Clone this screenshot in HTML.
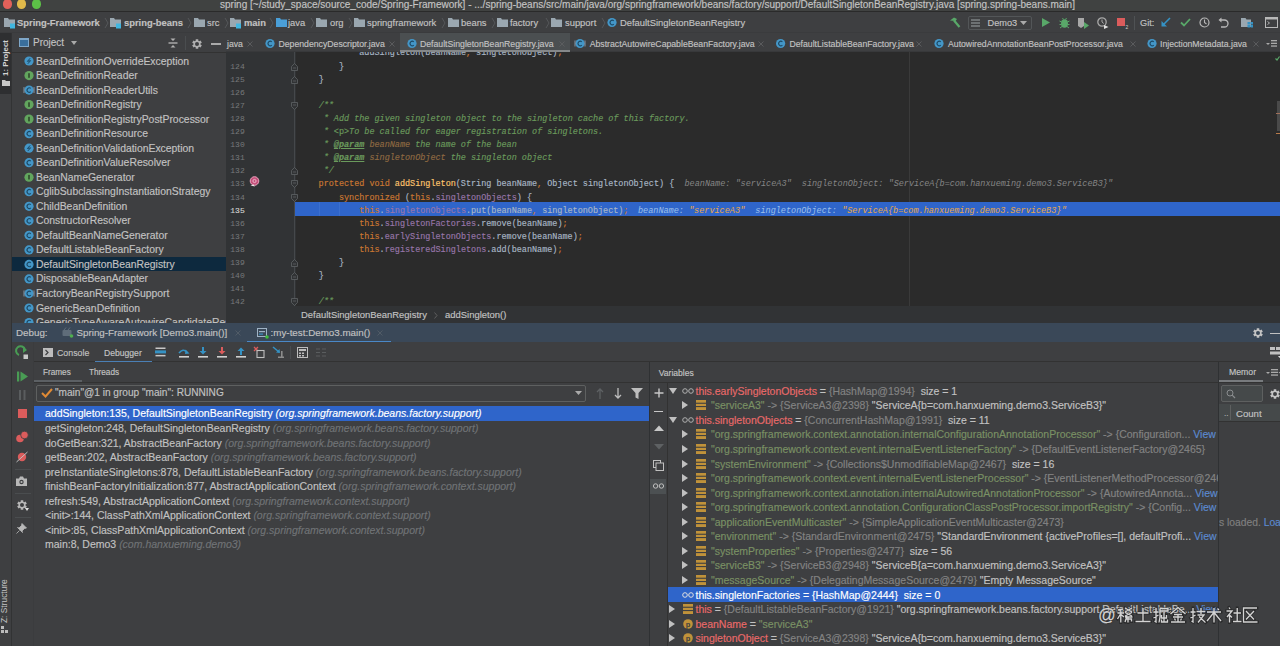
<!DOCTYPE html>
<html><head><meta charset="utf-8"><style>
*{margin:0;padding:0;box-sizing:border-box}
html,body{width:1280px;height:646px;overflow:hidden;background:#3e3f41;font-family:"Liberation Sans",sans-serif}
.a{position:absolute}
.t{position:absolute;white-space:pre;line-height:14px;height:14px;-webkit-text-stroke:0.15px currentColor}
.m{position:absolute;white-space:pre;line-height:14px;height:14px;font-family:"Liberation Mono",monospace}
.i{font-style:italic}
.b{font-weight:bold}
svg{position:absolute;overflow:visible}
</style></head><body>
<div class="a" style="left:0px;top:0px;width:1280px;height:11px;background:#404241;"></div>
<div class="a" style="left:0px;top:11px;width:1280px;height:1px;background:#2a2a2a;"></div>
<div class="a" style="left:2.6px;top:-0.7px;width:9.4px;height:9.4px;border-radius:50%;background:#e2615a"></div>
<div class="a" style="left:17.1px;top:-0.7px;width:9.4px;height:9.4px;border-radius:50%;background:#e0b94a"></div>
<div class="a" style="left:31.6px;top:-0.7px;width:9.4px;height:9.4px;border-radius:50%;background:#5cbf47"></div>
<div class="t" style="left:220px;top:-2.00px;font-size:10px;color:#c4c4c4;">spring [~/study_space/source_code/Spring-Framework] - .../spring-beans/src/main/java/org/springframework/beans/factory/support/DefaultSingletonBeanRegistry.java [spring.spring-beans.main]</div>
<div class="a" style="left:0px;top:13px;width:1280px;height:19px;background:#3e3f41;"></div>
<div class="a" style="left:0px;top:32px;width:1280px;height:1px;background:#3a3b3d;"></div>
<svg style="left:4px;top:17px" width="12" height="12" viewBox="0 0 12 12"><path d="M0 1 H4 L5 2.5 H11 V10 H0 Z" fill="#9aa7b0"/><rect x="6" y="6.5" width="5" height="5" fill="#40b6e0"/></svg>
<div class="t" style="left:17px;top:15.50px;font-size:9.4px;color:#c2c2c2;font-weight:bold">Spring-Framework</div>
<svg style="left:104px;top:18px" width="5" height="10" viewBox="0 0 5 10"><path d="M1 0 L4 5 L1 10" stroke="#5a5d5f" fill="none" stroke-width="0.8"/></svg>
<svg style="left:110px;top:17px" width="12" height="12" viewBox="0 0 12 12"><path d="M0 1 H4 L5 2.5 H11 V10 H0 Z" fill="#9aa7b0"/><rect x="6" y="6.5" width="5" height="5" fill="#40b6e0"/></svg>
<div class="t" style="left:124px;top:15.50px;font-size:9.4px;color:#c2c2c2;font-weight:bold">spring-beans</div>
<svg style="left:187px;top:18px" width="5" height="10" viewBox="0 0 5 10"><path d="M1 0 L4 5 L1 10" stroke="#5a5d5f" fill="none" stroke-width="0.8"/></svg>
<svg style="left:194px;top:17px" width="12" height="12" viewBox="0 0 12 12"><path d="M0 1 H4 L5 2.5 H11 V10 H0 Z" fill="#9aa7b0"/></svg>
<div class="t" style="left:207px;top:15.50px;font-size:9.4px;color:#c2c2c2;">src</div>
<svg style="left:224px;top:18px" width="5" height="10" viewBox="0 0 5 10"><path d="M1 0 L4 5 L1 10" stroke="#5a5d5f" fill="none" stroke-width="0.8"/></svg>
<svg style="left:230px;top:17px" width="12" height="12" viewBox="0 0 12 12"><path d="M0 1 H4 L5 2.5 H11 V10 H0 Z" fill="#9aa7b0"/><rect x="6" y="6.5" width="5" height="5" fill="#40b6e0"/></svg>
<div class="t" style="left:244px;top:15.50px;font-size:9.4px;color:#c2c2c2;font-weight:bold">main</div>
<svg style="left:269px;top:18px" width="5" height="10" viewBox="0 0 5 10"><path d="M1 0 L4 5 L1 10" stroke="#5a5d5f" fill="none" stroke-width="0.8"/></svg>
<svg style="left:276px;top:17px" width="12" height="12" viewBox="0 0 12 12"><path d="M0 1 H4 L5 2.5 H11 V10 H0 Z" fill="#4a9fd8"/></svg>
<div class="t" style="left:288px;top:15.50px;font-size:9.4px;color:#c2c2c2;">java</div>
<svg style="left:310px;top:18px" width="5" height="10" viewBox="0 0 5 10"><path d="M1 0 L4 5 L1 10" stroke="#5a5d5f" fill="none" stroke-width="0.8"/></svg>
<svg style="left:316px;top:17px" width="12" height="12" viewBox="0 0 12 12"><path d="M0 1 H4 L5 2.5 H11 V10 H0 Z" fill="#9aa7b0"/></svg>
<div class="t" style="left:330px;top:15.50px;font-size:9.4px;color:#c2c2c2;">org</div>
<svg style="left:348px;top:18px" width="5" height="10" viewBox="0 0 5 10"><path d="M1 0 L4 5 L1 10" stroke="#5a5d5f" fill="none" stroke-width="0.8"/></svg>
<svg style="left:354px;top:17px" width="12" height="12" viewBox="0 0 12 12"><path d="M0 1 H4 L5 2.5 H11 V10 H0 Z" fill="#9aa7b0"/></svg>
<div class="t" style="left:367px;top:15.50px;font-size:9.4px;color:#c2c2c2;">springframework</div>
<svg style="left:441px;top:18px" width="5" height="10" viewBox="0 0 5 10"><path d="M1 0 L4 5 L1 10" stroke="#5a5d5f" fill="none" stroke-width="0.8"/></svg>
<svg style="left:448px;top:17px" width="12" height="12" viewBox="0 0 12 12"><path d="M0 1 H4 L5 2.5 H11 V10 H0 Z" fill="#9aa7b0"/></svg>
<div class="t" style="left:461px;top:15.50px;font-size:9.4px;color:#c2c2c2;">beans</div>
<svg style="left:491px;top:18px" width="5" height="10" viewBox="0 0 5 10"><path d="M1 0 L4 5 L1 10" stroke="#5a5d5f" fill="none" stroke-width="0.8"/></svg>
<svg style="left:497px;top:17px" width="12" height="12" viewBox="0 0 12 12"><path d="M0 1 H4 L5 2.5 H11 V10 H0 Z" fill="#9aa7b0"/></svg>
<div class="t" style="left:510px;top:15.50px;font-size:9.4px;color:#c2c2c2;">factory</div>
<svg style="left:545px;top:18px" width="5" height="10" viewBox="0 0 5 10"><path d="M1 0 L4 5 L1 10" stroke="#5a5d5f" fill="none" stroke-width="0.8"/></svg>
<svg style="left:551px;top:17px" width="12" height="12" viewBox="0 0 12 12"><path d="M0 1 H4 L5 2.5 H11 V10 H0 Z" fill="#9aa7b0"/></svg>
<div class="t" style="left:565px;top:15.50px;font-size:9.4px;color:#c2c2c2;">support</div>
<svg style="left:601px;top:18px" width="5" height="10" viewBox="0 0 5 10"><path d="M1 0 L4 5 L1 10" stroke="#5a5d5f" fill="none" stroke-width="0.8"/></svg>
<svg style="left:0;top:0" width="1" height="1"><circle cx="612" cy="22.5" r="4.6" fill="#4497c8"/><path d="M613.8 20.9 A2.2 2.2 0 1 0 613.8 24.1" stroke="#1d4a66" stroke-width="1.1" fill="none"/></svg>
<div class="t" style="left:620px;top:15.50px;font-size:9.4px;color:#c2c2c2;">DefaultSingletonBeanRegistry</div>
<div class="a" style="left:0px;top:33px;width:12px;height:613px;background:#3e3f41;"></div>
<div class="a" style="left:11px;top:33px;width:1px;height:613px;background:#323334;"></div>
<div class="a" style="left:0px;top:33px;width:11px;height:61px;background:#2e2f31;"></div>
<div class="a" style="left:-0.5px;top:75.5px;width:40px;height:11px;line-height:11px;white-space:pre;font-size:7.9px;font-weight:bold;color:#d4d4d4;transform-origin:0 0;transform:rotate(-90deg)">1: Project</div>
<svg style="left:2px;top:80px" width="8" height="6" viewBox="0 0 8 6"><path d="M0 0 H3 L4 1 H8 V6 H0Z" fill="#c8c8c8"/></svg>
<div class="a" style="left:-1.5px;top:623px;width:48px;height:11px;line-height:11px;white-space:pre;font-size:8.4px;color:#c4c4c4;transform-origin:0 0;transform:rotate(-90deg)">Z: Structure</div>
<svg style="left:1px;top:626px" width="7" height="7" viewBox="0 0 7 7"><rect x="0" y="0" width="3" height="3" fill="#bbb"/><rect x="0" y="4" width="3" height="3" fill="#bbb"/><rect x="4" y="4" width="3" height="3" fill="#bbb"/></svg>
<div class="a" style="left:12px;top:33px;width:214px;height:290px;background:#3e3f41;"></div>
<div class="a" style="left:12px;top:52px;width:214px;height:1px;background:#323232;"></div>
<svg style="left:19px;top:38px" width="10" height="9" viewBox="0 0 10 9"><rect x="0" y="0" width="10" height="9" fill="#7fa7c8"/><rect x="1" y="2" width="8" height="6" fill="#3a6f9c"/></svg>
<div class="t" style="left:33px;top:36.00px;font-size:10px;color:#c2c2c2;">Project</div>
<svg style="left:71px;top:41px" width="6" height="4" viewBox="0 0 6 4"><path d="M0 0 H6 L3 4Z" fill="#aaaaaa"/></svg>
<svg style="left:168px;top:38px" width="10" height="10" viewBox="0 0 10 10"><path d="M2.5 0.5 H7.5 L5 3Z M2.5 9.5 H7.5 L5 7Z" fill="#b0b0b0"/><rect x="0.5" y="4.3" width="9" height="1.4" fill="#b0b0b0"/></svg>
<div class="a" style="left:185px;top:36px;width:1px;height:14px;background:#4a4d4f;"></div>
<svg style="left:191.5px;top:38.5px" width="10" height="10" viewBox="0 0 10 10"><path d="M6.34 8.23 L6.24 9.84 L3.76 9.84 L3.66 8.23 L2.87 7.78 L1.43 8.50 L0.18 6.34 L1.53 5.46 L1.53 4.54 L0.18 3.66 L1.43 1.50 L2.87 2.22 L3.66 1.77 L3.76 0.16 L6.24 0.16 L6.34 1.77 L7.13 2.22 L8.57 1.50 L9.82 3.66 L8.47 4.54 L8.47 5.46 L9.82 6.34 L8.57 8.50 L7.13 7.78Z" fill="#b0b0b0"/><circle cx="5.0" cy="5.0" r="2.00" fill="#3e3f41"/></svg>
<div class="a" style="left:211px;top:43px;width:10px;height:1.5px;background:#aaaaaa;"></div>
<svg style="left:0;top:0" width="1" height="1"><circle cx="29" cy="61.0" r="4.6" fill="#4497c8"/><path d="M30.2 58.2 L27.4 61.4 L30.6 60.6 L27.8 63.8" stroke="#1d4a66" stroke-width="1" fill="none"/></svg>
<div class="t" style="left:36px;top:54.50px;font-size:10.4px;color:#c2c2c2;">BeanDefinitionOverrideException</div>
<svg style="left:0;top:0" width="1" height="1"><circle cx="29" cy="75.53" r="4.6" fill="#62a55e"/><rect x="28.2" y="73.2" width="1.6" height="4.6" fill="#2f4a2b"/></svg>
<div class="t" style="left:36px;top:69.03px;font-size:10.4px;color:#c2c2c2;">BeanDefinitionReader</div>
<svg style="left:0;top:0" width="1" height="1"><circle cx="29" cy="90.06" r="4.6" fill="#4497c8"/><path d="M30.8 88.46000000000001 A2.2 2.2 0 1 0 30.8 91.66" stroke="#1d4a66" stroke-width="1.1" fill="none"/><path d="M24 87.06 V93.06 M34 87.06 V93.06" stroke="#9ab" stroke-width="0.8"/></svg>
<div class="t" style="left:36px;top:83.56px;font-size:10.4px;color:#c2c2c2;">BeanDefinitionReaderUtils</div>
<svg style="left:0;top:0" width="1" height="1"><circle cx="29" cy="104.59" r="4.6" fill="#62a55e"/><rect x="28.2" y="102.3" width="1.6" height="4.6" fill="#2f4a2b"/></svg>
<div class="t" style="left:36px;top:98.09px;font-size:10.4px;color:#c2c2c2;">BeanDefinitionRegistry</div>
<svg style="left:0;top:0" width="1" height="1"><circle cx="29" cy="119.12" r="4.6" fill="#62a55e"/><rect x="28.2" y="116.8" width="1.6" height="4.6" fill="#2f4a2b"/></svg>
<div class="t" style="left:36px;top:112.62px;font-size:10.4px;color:#c2c2c2;">BeanDefinitionRegistryPostProcessor</div>
<svg style="left:0;top:0" width="1" height="1"><circle cx="29" cy="133.64999999999998" r="4.6" fill="#4497c8"/><path d="M30.8 132.04999999999998 A2.2 2.2 0 1 0 30.8 135.24999999999997" stroke="#1d4a66" stroke-width="1.1" fill="none"/></svg>
<div class="t" style="left:36px;top:127.15px;font-size:10.4px;color:#c2c2c2;">BeanDefinitionResource</div>
<svg style="left:0;top:0" width="1" height="1"><circle cx="29" cy="148.18" r="4.6" fill="#4497c8"/><path d="M30.2 145.38 L27.4 148.58 L30.6 147.78 L27.8 150.98000000000002" stroke="#1d4a66" stroke-width="1" fill="none"/></svg>
<div class="t" style="left:36px;top:141.68px;font-size:10.4px;color:#c2c2c2;">BeanDefinitionValidationException</div>
<svg style="left:0;top:0" width="1" height="1"><circle cx="29" cy="162.70999999999998" r="4.6" fill="#4497c8"/><path d="M30.8 161.10999999999999 A2.2 2.2 0 1 0 30.8 164.30999999999997" stroke="#1d4a66" stroke-width="1.1" fill="none"/></svg>
<div class="t" style="left:36px;top:156.21px;font-size:10.4px;color:#c2c2c2;">BeanDefinitionValueResolver</div>
<svg style="left:0;top:0" width="1" height="1"><circle cx="29" cy="177.24" r="4.6" fill="#62a55e"/><rect x="28.2" y="174.9" width="1.6" height="4.6" fill="#2f4a2b"/></svg>
<div class="t" style="left:36px;top:170.74px;font-size:10.4px;color:#c2c2c2;">BeanNameGenerator</div>
<svg style="left:0;top:0" width="1" height="1"><circle cx="29" cy="191.76999999999998" r="4.6" fill="#4497c8"/><path d="M30.8 190.17 A2.2 2.2 0 1 0 30.8 193.36999999999998" stroke="#1d4a66" stroke-width="1.1" fill="none"/></svg>
<div class="t" style="left:36px;top:185.27px;font-size:10.4px;color:#c2c2c2;">CglibSubclassingInstantiationStrategy</div>
<svg style="left:0;top:0" width="1" height="1"><circle cx="29" cy="206.29999999999998" r="4.6" fill="#4497c8"/><path d="M30.8 204.7 A2.2 2.2 0 1 0 30.8 207.89999999999998" stroke="#1d4a66" stroke-width="1.1" fill="none"/></svg>
<div class="t" style="left:36px;top:199.80px;font-size:10.4px;color:#c2c2c2;">ChildBeanDefinition</div>
<svg style="left:0;top:0" width="1" height="1"><circle cx="29" cy="220.82999999999998" r="4.6" fill="#4497c8"/><path d="M30.8 219.23 A2.2 2.2 0 1 0 30.8 222.42999999999998" stroke="#1d4a66" stroke-width="1.1" fill="none"/></svg>
<div class="t" style="left:36px;top:214.33px;font-size:10.4px;color:#c2c2c2;">ConstructorResolver</div>
<svg style="left:0;top:0" width="1" height="1"><circle cx="29" cy="235.35999999999999" r="4.6" fill="#4497c8"/><path d="M30.8 233.76 A2.2 2.2 0 1 0 30.8 236.95999999999998" stroke="#1d4a66" stroke-width="1.1" fill="none"/></svg>
<div class="t" style="left:36px;top:228.86px;font-size:10.4px;color:#c2c2c2;">DefaultBeanNameGenerator</div>
<svg style="left:0;top:0" width="1" height="1"><circle cx="29" cy="249.89" r="4.6" fill="#4497c8"/><path d="M30.8 248.29 A2.2 2.2 0 1 0 30.8 251.48999999999998" stroke="#1d4a66" stroke-width="1.1" fill="none"/></svg>
<div class="t" style="left:36px;top:243.39px;font-size:10.4px;color:#c2c2c2;">DefaultListableBeanFactory</div>
<div class="a" style="left:12px;top:256.91999999999996px;width:214px;height:14.5px;background:#0d293e;"></div>
<svg style="left:0;top:0" width="1" height="1"><circle cx="29" cy="264.41999999999996" r="4.6" fill="#4497c8"/><path d="M30.8 262.81999999999994 A2.2 2.2 0 1 0 30.8 266.02" stroke="#1d4a66" stroke-width="1.1" fill="none"/></svg>
<div class="t" style="left:36px;top:257.92px;font-size:10.4px;color:#c2c2c2;">DefaultSingletonBeanRegistry</div>
<svg style="left:0;top:0" width="1" height="1"><circle cx="29" cy="278.95" r="4.6" fill="#4497c8"/><path d="M30.8 277.34999999999997 A2.2 2.2 0 1 0 30.8 280.55" stroke="#1d4a66" stroke-width="1.1" fill="none"/></svg>
<div class="t" style="left:36px;top:272.45px;font-size:10.4px;color:#c2c2c2;">DisposableBeanAdapter</div>
<svg style="left:0;top:0" width="1" height="1"><circle cx="29" cy="293.48" r="4.6" fill="#4497c8"/><path d="M30.8 291.88 A2.2 2.2 0 1 0 30.8 295.08000000000004" stroke="#1d4a66" stroke-width="1.1" fill="none"/><path d="M24 290.48 V296.48 M34 290.48 V296.48" stroke="#9ab" stroke-width="0.8"/></svg>
<div class="t" style="left:36px;top:286.98px;font-size:10.4px;color:#c2c2c2;">FactoryBeanRegistrySupport</div>
<svg style="left:0;top:0" width="1" height="1"><circle cx="29" cy="308.01" r="4.6" fill="#4497c8"/><path d="M30.8 306.40999999999997 A2.2 2.2 0 1 0 30.8 309.61" stroke="#1d4a66" stroke-width="1.1" fill="none"/></svg>
<div class="t" style="left:36px;top:301.51px;font-size:10.4px;color:#c2c2c2;">GenericBeanDefinition</div>
<svg style="left:0;top:0" width="1" height="1"><circle cx="29" cy="322.53999999999996" r="4.6" fill="#4497c8"/><path d="M30.8 320.93999999999994 A2.2 2.2 0 1 0 30.8 324.14" stroke="#1d4a66" stroke-width="1.1" fill="none"/></svg>
<div class="t" style="left:36px;top:316.04px;font-size:10.4px;color:#c2c2c2;">GenericTypeAwareAutowireCandidateResolver</div>
<div class="a" style="left:226px;top:33px;width:1054px;height:19px;background:#3e3f41;"></div>
<div class="a" style="left:226px;top:51px;width:1054px;height:1px;background:#38393b;"></div>
<div class="a" style="left:400px;top:33px;width:170px;height:18px;background:#4b4f51;"></div>
<div class="a" style="left:400px;top:50px;width:170px;height:1.5px;background:#85888a;"></div>
<div class="t" style="left:227px;top:36.50px;font-size:8.7px;color:#c2c2c2;">java</div>
<svg style="left:247px;top:40.5px" width="6" height="6" viewBox="0 0 6 6"><path d="M0.5 0.5 L5.5 5.5 M5.5 0.5 L0.5 5.5" stroke="#5e5f61" stroke-width="0.9"/></svg>
<svg style="left:0;top:0" width="1" height="1"><circle cx="270" cy="43.5" r="4.6" fill="#4497c8"/><path d="M271.8 41.9 A2.2 2.2 0 1 0 271.8 45.1" stroke="#1d4a66" stroke-width="1.1" fill="none"/></svg>
<div class="t" style="left:278.5px;top:36.50px;font-size:8.7px;color:#c2c2c2;">DependencyDescriptor.java</div>
<svg style="left:389px;top:40.5px" width="6" height="6" viewBox="0 0 6 6"><path d="M0.5 0.5 L5.5 5.5 M5.5 0.5 L0.5 5.5" stroke="#5e5f61" stroke-width="0.9"/></svg>
<svg style="left:0;top:0" width="1" height="1"><circle cx="412" cy="43.5" r="4.6" fill="#4497c8"/><path d="M413.8 41.9 A2.2 2.2 0 1 0 413.8 45.1" stroke="#1d4a66" stroke-width="1.1" fill="none"/></svg>
<div class="t" style="left:420px;top:36.50px;font-size:8.7px;color:#c2c2c2;">DefaultSingletonBeanRegistry.java</div>
<svg style="left:558.5px;top:40.5px" width="6" height="6" viewBox="0 0 6 6"><path d="M0.5 0.5 L5.5 5.5 M5.5 0.5 L0.5 5.5" stroke="#5e5f61" stroke-width="0.9"/></svg>
<svg style="left:0;top:0" width="1" height="1"><circle cx="580" cy="43.5" r="4.6" fill="#4497c8"/><path d="M581.8 41.9 A2.2 2.2 0 1 0 581.8 45.1" stroke="#1d4a66" stroke-width="1.1" fill="none"/><path d="M575 40.5 V46.5 M585 40.5 V46.5" stroke="#9ab" stroke-width="0.8"/></svg>
<div class="t" style="left:589.7px;top:36.50px;font-size:8.7px;color:#c2c2c2;">AbstractAutowireCapableBeanFactory.java</div>
<svg style="left:758px;top:40.5px" width="6" height="6" viewBox="0 0 6 6"><path d="M0.5 0.5 L5.5 5.5 M5.5 0.5 L0.5 5.5" stroke="#5e5f61" stroke-width="0.9"/></svg>
<svg style="left:0;top:0" width="1" height="1"><circle cx="780.6" cy="43.5" r="4.6" fill="#4497c8"/><path d="M782.4 41.9 A2.2 2.2 0 1 0 782.4 45.1" stroke="#1d4a66" stroke-width="1.1" fill="none"/></svg>
<div class="t" style="left:789.5px;top:36.50px;font-size:8.7px;color:#c2c2c2;">DefaultListableBeanFactory.java</div>
<svg style="left:916px;top:40.5px" width="6" height="6" viewBox="0 0 6 6"><path d="M0.5 0.5 L5.5 5.5 M5.5 0.5 L0.5 5.5" stroke="#5e5f61" stroke-width="0.9"/></svg>
<svg style="left:0;top:0" width="1" height="1"><circle cx="939" cy="43.5" r="4.6" fill="#4497c8"/><path d="M940.8 41.9 A2.2 2.2 0 1 0 940.8 45.1" stroke="#1d4a66" stroke-width="1.1" fill="none"/></svg>
<div class="t" style="left:948px;top:36.50px;font-size:8.7px;color:#c2c2c2;">AutowiredAnnotationBeanPostProcessor.java</div>
<svg style="left:1130px;top:40.5px" width="6" height="6" viewBox="0 0 6 6"><path d="M0.5 0.5 L5.5 5.5 M5.5 0.5 L0.5 5.5" stroke="#5e5f61" stroke-width="0.9"/></svg>
<svg style="left:0;top:0" width="1" height="1"><circle cx="1152" cy="43.5" r="4.6" fill="#4497c8"/><path d="M1153.8 41.9 A2.2 2.2 0 1 0 1153.8 45.1" stroke="#1d4a66" stroke-width="1.1" fill="none"/></svg>
<div class="t" style="left:1160px;top:36.50px;font-size:8.7px;color:#c2c2c2;">InjectionMetadata.java</div>
<svg style="left:1253px;top:40.5px" width="6" height="6" viewBox="0 0 6 6"><path d="M0.5 0.5 L5.5 5.5 M5.5 0.5 L0.5 5.5" stroke="#5e5f61" stroke-width="0.9"/></svg>
<svg style="left:1266px;top:39px" width="12" height="9" viewBox="0 0 12 9"><path d="M0 4 L2 6 L4 4Z" fill="#aaa"/><rect x="5" y="1" width="6" height="1.3" fill="#aaa"/><rect x="5" y="3.7" width="6" height="1.3" fill="#aaa"/><rect x="5" y="6.4" width="6" height="1.3" fill="#aaa"/></svg>
<div class="a" style="left:0;top:52px;width:1280px;height:254px;overflow:hidden"><div class="a" style="left:0;top:-52px;width:1280px;height:646px">
<div class="a" style="left:226px;top:52px;width:70px;height:254px;background:#313335;"></div>
<div class="a" style="left:296px;top:52px;width:984px;height:254px;background:#2b2b2b;"></div>
<div class="a" style="left:909px;top:52px;width:1px;height:254px;background:#3a3a3a;"></div>
<div class="a" style="left:294px;top:202px;width:986px;height:13.5px;background:#2f65ca;"></div>
<div class="a" style="left:318.5px;top:202px;width:1px;height:13.5px;background:#3a6fcf;"></div>
<div class="a" style="left:339px;top:202px;width:1px;height:13.5px;background:#3a6fcf;"></div>
<div class="a" style="left:293.5px;top:52px;width:1px;height:254px;background:#45484b;"></div>
<div class="t" style="left:230.3px;top:59.50px;font-size:8.0px;color:#77797b;font-family:'Liberation Mono',monospace;-webkit-text-stroke:0;">124</div>
<div class="t" style="left:230.3px;top:72.60px;font-size:8.0px;color:#77797b;font-family:'Liberation Mono',monospace;-webkit-text-stroke:0;">125</div>
<div class="t" style="left:230.3px;top:85.70px;font-size:8.0px;color:#77797b;font-family:'Liberation Mono',monospace;-webkit-text-stroke:0;">126</div>
<div class="t" style="left:230.3px;top:98.80px;font-size:8.0px;color:#77797b;font-family:'Liberation Mono',monospace;-webkit-text-stroke:0;">127</div>
<div class="t" style="left:230.3px;top:111.90px;font-size:8.0px;color:#77797b;font-family:'Liberation Mono',monospace;-webkit-text-stroke:0;">128</div>
<div class="t" style="left:230.3px;top:125.00px;font-size:8.0px;color:#77797b;font-family:'Liberation Mono',monospace;-webkit-text-stroke:0;">129</div>
<div class="t" style="left:230.3px;top:138.10px;font-size:8.0px;color:#77797b;font-family:'Liberation Mono',monospace;-webkit-text-stroke:0;">130</div>
<div class="t" style="left:230.3px;top:151.20px;font-size:8.0px;color:#77797b;font-family:'Liberation Mono',monospace;-webkit-text-stroke:0;">131</div>
<div class="t" style="left:230.3px;top:164.30px;font-size:8.0px;color:#77797b;font-family:'Liberation Mono',monospace;-webkit-text-stroke:0;">132</div>
<div class="t" style="left:230.3px;top:177.40px;font-size:8.0px;color:#77797b;font-family:'Liberation Mono',monospace;-webkit-text-stroke:0;">133</div>
<div class="t" style="left:230.3px;top:190.50px;font-size:8.0px;color:#77797b;font-family:'Liberation Mono',monospace;-webkit-text-stroke:0;">134</div>
<div class="t" style="left:230.3px;top:203.60px;font-size:8.0px;color:#d0d0d0;font-family:'Liberation Mono',monospace;">135</div>
<div class="t" style="left:230.3px;top:216.70px;font-size:8.0px;color:#77797b;font-family:'Liberation Mono',monospace;-webkit-text-stroke:0;">136</div>
<div class="t" style="left:230.3px;top:229.80px;font-size:8.0px;color:#77797b;font-family:'Liberation Mono',monospace;-webkit-text-stroke:0;">137</div>
<div class="t" style="left:230.3px;top:242.90px;font-size:8.0px;color:#77797b;font-family:'Liberation Mono',monospace;-webkit-text-stroke:0;">138</div>
<div class="t" style="left:230.3px;top:256.00px;font-size:8.0px;color:#77797b;font-family:'Liberation Mono',monospace;-webkit-text-stroke:0;">139</div>
<div class="t" style="left:230.3px;top:269.10px;font-size:8.0px;color:#77797b;font-family:'Liberation Mono',monospace;-webkit-text-stroke:0;">140</div>
<div class="t" style="left:230.3px;top:282.20px;font-size:8.0px;color:#77797b;font-family:'Liberation Mono',monospace;-webkit-text-stroke:0;">141</div>
<div class="t" style="left:230.3px;top:295.30px;font-size:8.0px;color:#77797b;font-family:'Liberation Mono',monospace;-webkit-text-stroke:0;">142</div>
<svg style="left:290.5px;top:62.5px" width="7" height="8" viewBox="0 0 7 8"><path d="M0.5 7.5 H6.5 V3.5 L3.5 0.5 L0.5 3.5Z" fill="#313335" stroke="#5f6366" stroke-width="0.8"/><path d="M2 5 H5" stroke="#5f6366" stroke-width="0.8"/></svg>
<svg style="left:290.5px;top:75.6px" width="7" height="8" viewBox="0 0 7 8"><path d="M0.5 7.5 H6.5 V3.5 L3.5 0.5 L0.5 3.5Z" fill="#313335" stroke="#5f6366" stroke-width="0.8"/><path d="M2 5 H5" stroke="#5f6366" stroke-width="0.8"/></svg>
<svg style="left:290.5px;top:167.3px" width="7" height="8" viewBox="0 0 7 8"><path d="M0.5 7.5 H6.5 V3.5 L3.5 0.5 L0.5 3.5Z" fill="#313335" stroke="#5f6366" stroke-width="0.8"/><path d="M2 5 H5" stroke="#5f6366" stroke-width="0.8"/></svg>
<svg style="left:290.5px;top:259.0px" width="7" height="8" viewBox="0 0 7 8"><path d="M0.5 7.5 H6.5 V3.5 L3.5 0.5 L0.5 3.5Z" fill="#313335" stroke="#5f6366" stroke-width="0.8"/><path d="M2 5 H5" stroke="#5f6366" stroke-width="0.8"/></svg>
<svg style="left:290.5px;top:272.1px" width="7" height="8" viewBox="0 0 7 8"><path d="M0.5 7.5 H6.5 V3.5 L3.5 0.5 L0.5 3.5Z" fill="#313335" stroke="#5f6366" stroke-width="0.8"/><path d="M2 5 H5" stroke="#5f6366" stroke-width="0.8"/></svg>
<svg style="left:290.5px;top:101.8px" width="7" height="8" viewBox="0 0 7 8"><path d="M0.5 0.5 H6.5 V4.5 L3.5 7.5 L0.5 4.5Z" fill="#313335" stroke="#5f6366" stroke-width="0.8"/><path d="M2 3 H5" stroke="#5f6366" stroke-width="0.8"/></svg>
<svg style="left:290.5px;top:180.39999999999998px" width="7" height="8" viewBox="0 0 7 8"><path d="M0.5 0.5 H6.5 V4.5 L3.5 7.5 L0.5 4.5Z" fill="#313335" stroke="#5f6366" stroke-width="0.8"/><path d="M2 3 H5" stroke="#5f6366" stroke-width="0.8"/></svg>
<svg style="left:290.5px;top:193.5px" width="7" height="8" viewBox="0 0 7 8"><path d="M0.5 0.5 H6.5 V4.5 L3.5 7.5 L0.5 4.5Z" fill="#313335" stroke="#5f6366" stroke-width="0.8"/><path d="M2 3 H5" stroke="#5f6366" stroke-width="0.8"/></svg>
<svg style="left:290.5px;top:298.29999999999995px" width="7" height="8" viewBox="0 0 7 8"><path d="M0.5 0.5 H6.5 V4.5 L3.5 7.5 L0.5 4.5Z" fill="#313335" stroke="#5f6366" stroke-width="0.8"/><path d="M2 3 H5" stroke="#5f6366" stroke-width="0.8"/></svg>
<svg style="left:249px;top:176px" width="12" height="13" viewBox="0 0 12 13"><circle cx="5.5" cy="5" r="4.3" fill="#c4507a" stroke="#e7a3bd" stroke-width="1"/><circle cx="5.5" cy="5" r="1.6" fill="none" stroke="#f0c8d8" stroke-width="0.8"/><path d="M1.5 9.5 L4.5 8.5 L6 10.5 Z" fill="#e8e8e8"/></svg>
<div class="t" style="left:359.26px;top:46.40px;font-size:8.47px;color:#a9b7c6;font-family:'Liberation Mono',monospace;">addSingleton(beanName</div>
<div class="t" style="left:465.94px;top:46.40px;font-size:8.47px;color:#cc7832;font-family:'Liberation Mono',monospace;">, </div>
<div class="t" style="left:476.1px;top:46.40px;font-size:8.47px;color:#a9b7c6;font-family:'Liberation Mono',monospace;">singletonObject)</div>
<div class="t" style="left:557.38px;top:46.40px;font-size:8.47px;color:#cc7832;font-family:'Liberation Mono',monospace;">;</div>
<div class="t" style="left:298.3px;top:59.50px;font-size:8.47px;color:#a9b7c6;font-family:'Liberation Mono',monospace;">        }</div>
<div class="t" style="left:298.3px;top:72.60px;font-size:8.47px;color:#a9b7c6;font-family:'Liberation Mono',monospace;">    }</div>
<div class="t" style="left:298.3px;top:98.80px;font-size:8.47px;color:#6a9a5c;font-family:'Liberation Mono',monospace;font-style:italic;">    /**</div>
<div class="t" style="left:298.3px;top:111.90px;font-size:8.47px;color:#6a9a5c;font-family:'Liberation Mono',monospace;font-style:italic;">     * Add the given singleton object to the singleton cache of this factory.</div>
<div class="t" style="left:298.3px;top:125.00px;font-size:8.47px;color:#6a9a5c;font-family:'Liberation Mono',monospace;font-style:italic;">     * </div>
<div class="t" style="left:333.86px;top:125.00px;font-size:8.47px;color:#6a9a5c;font-family:'Liberation Mono',monospace;font-style:normal;">&lt;p&gt;</div>
<div class="t" style="left:349.1px;top:125.00px;font-size:8.47px;color:#6a9a5c;font-family:'Liberation Mono',monospace;font-style:italic;">To be called for eager registration of singletons.</div>
<div class="t" style="left:298.3px;top:138.10px;font-size:8.47px;color:#6a9a5c;font-family:'Liberation Mono',monospace;font-style:italic;">     * </div>
<div class="t" style="left:333.86px;top:138.10px;font-size:8.47px;color:#6a9a5c;font-family:'Liberation Mono',monospace;font-weight:bold;font-style:italic;text-decoration:underline;">@param</div>
<div class="t" style="left:369.42px;top:138.10px;font-size:8.47px;color:#8f6a42;font-family:'Liberation Mono',monospace;font-style:italic;">beanName</div>
<div class="t" style="left:410.06px;top:138.10px;font-size:8.47px;color:#6a9a5c;font-family:'Liberation Mono',monospace;font-style:italic;"> the name of the bean</div>
<div class="t" style="left:298.3px;top:151.20px;font-size:8.47px;color:#6a9a5c;font-family:'Liberation Mono',monospace;font-style:italic;">     * </div>
<div class="t" style="left:333.86px;top:151.20px;font-size:8.47px;color:#6a9a5c;font-family:'Liberation Mono',monospace;font-weight:bold;font-style:italic;text-decoration:underline;">@param</div>
<div class="t" style="left:369.42px;top:151.20px;font-size:8.47px;color:#8f6a42;font-family:'Liberation Mono',monospace;font-style:italic;">singletonObject</div>
<div class="t" style="left:445.62px;top:151.20px;font-size:8.47px;color:#6a9a5c;font-family:'Liberation Mono',monospace;font-style:italic;"> the singleton object</div>
<div class="t" style="left:298.3px;top:164.30px;font-size:8.47px;color:#6a9a5c;font-family:'Liberation Mono',monospace;font-style:italic;">     */</div>
<div class="t" style="left:318.62px;top:177.40px;font-size:8.47px;color:#cc7832;font-family:'Liberation Mono',monospace;">protected void </div>
<div class="t" style="left:394.82px;top:177.40px;font-size:8.47px;color:#ffc66d;font-family:'Liberation Mono',monospace;">addSingleton</div>
<div class="t" style="left:455.78px;top:177.40px;font-size:8.47px;color:#a9b7c6;font-family:'Liberation Mono',monospace;">(String beanName</div>
<div class="t" style="left:537.06px;top:177.40px;font-size:8.47px;color:#cc7832;font-family:'Liberation Mono',monospace;">, </div>
<div class="t" style="left:547.22px;top:177.40px;font-size:8.47px;color:#a9b7c6;font-family:'Liberation Mono',monospace;">Object singletonObject) {</div>
<div class="t" style="left:338.94px;top:190.50px;font-size:8.47px;color:#cc7832;font-family:'Liberation Mono',monospace;">synchronized </div>
<div class="t" style="left:404.98px;top:190.50px;font-size:8.47px;color:#a9b7c6;font-family:'Liberation Mono',monospace;">(</div>
<div class="t" style="left:410.06px;top:190.50px;font-size:8.47px;color:#cc7832;font-family:'Liberation Mono',monospace;">this</div>
<div class="t" style="left:430.38px;top:190.50px;font-size:8.47px;color:#a9b7c6;font-family:'Liberation Mono',monospace;">.</div>
<div class="t" style="left:435.46px;top:190.50px;font-size:8.47px;color:#9876aa;font-family:'Liberation Mono',monospace;">singletonObjects</div>
<div class="t" style="left:516.74px;top:190.50px;font-size:8.47px;color:#a9b7c6;font-family:'Liberation Mono',monospace;">) {</div>
<div class="t" style="left:359.26px;top:203.60px;font-size:8.47px;color:#cc7832;font-family:'Liberation Mono',monospace;">this</div>
<div class="t" style="left:379.58px;top:203.60px;font-size:8.47px;color:#a9b7c6;font-family:'Liberation Mono',monospace;">.</div>
<div class="t" style="left:384.66px;top:203.60px;font-size:8.47px;color:#9876aa;font-family:'Liberation Mono',monospace;">singletonObjects</div>
<div class="t" style="left:465.94px;top:203.60px;font-size:8.47px;color:#a9b7c6;font-family:'Liberation Mono',monospace;">.put(beanName</div>
<div class="t" style="left:531.98px;top:203.60px;font-size:8.47px;color:#cc7832;font-family:'Liberation Mono',monospace;">, </div>
<div class="t" style="left:542.14px;top:203.60px;font-size:8.47px;color:#a9b7c6;font-family:'Liberation Mono',monospace;">singletonObject)</div>
<div class="t" style="left:623.42px;top:203.60px;font-size:8.47px;color:#cc7832;font-family:'Liberation Mono',monospace;">;</div>
<div class="t" style="left:359.26px;top:216.70px;font-size:8.47px;color:#cc7832;font-family:'Liberation Mono',monospace;">this</div>
<div class="t" style="left:379.58px;top:216.70px;font-size:8.47px;color:#a9b7c6;font-family:'Liberation Mono',monospace;">.</div>
<div class="t" style="left:384.66px;top:216.70px;font-size:8.47px;color:#9876aa;font-family:'Liberation Mono',monospace;">singletonFactories</div>
<div class="t" style="left:476.1px;top:216.70px;font-size:8.47px;color:#a9b7c6;font-family:'Liberation Mono',monospace;">.remove(beanName)</div>
<div class="t" style="left:562.46px;top:216.70px;font-size:8.47px;color:#cc7832;font-family:'Liberation Mono',monospace;">;</div>
<div class="t" style="left:359.26px;top:229.80px;font-size:8.47px;color:#cc7832;font-family:'Liberation Mono',monospace;">this</div>
<div class="t" style="left:379.58px;top:229.80px;font-size:8.47px;color:#a9b7c6;font-family:'Liberation Mono',monospace;">.</div>
<div class="t" style="left:384.66px;top:229.80px;font-size:8.47px;color:#9876aa;font-family:'Liberation Mono',monospace;">earlySingletonObjects</div>
<div class="t" style="left:491.34px;top:229.80px;font-size:8.47px;color:#a9b7c6;font-family:'Liberation Mono',monospace;">.remove(beanName)</div>
<div class="t" style="left:577.7px;top:229.80px;font-size:8.47px;color:#cc7832;font-family:'Liberation Mono',monospace;">;</div>
<div class="t" style="left:359.26px;top:242.90px;font-size:8.47px;color:#cc7832;font-family:'Liberation Mono',monospace;">this</div>
<div class="t" style="left:379.58px;top:242.90px;font-size:8.47px;color:#a9b7c6;font-family:'Liberation Mono',monospace;">.</div>
<div class="t" style="left:384.66px;top:242.90px;font-size:8.47px;color:#9876aa;font-family:'Liberation Mono',monospace;">registeredSingletons</div>
<div class="t" style="left:486.26px;top:242.90px;font-size:8.47px;color:#a9b7c6;font-family:'Liberation Mono',monospace;">.add(beanName)</div>
<div class="t" style="left:557.38px;top:242.90px;font-size:8.47px;color:#cc7832;font-family:'Liberation Mono',monospace;">;</div>
<div class="t" style="left:298.3px;top:256.00px;font-size:8.47px;color:#a9b7c6;font-family:'Liberation Mono',monospace;">        }</div>
<div class="t" style="left:298.3px;top:269.10px;font-size:8.47px;color:#a9b7c6;font-family:'Liberation Mono',monospace;">    }</div>
<div class="t" style="left:298.3px;top:295.30px;font-size:8.47px;color:#6a9a5c;font-family:'Liberation Mono',monospace;font-style:italic;">    /**</div>
<div class="t" style="left:684.5px;top:177.40px;font-size:8.5px;color:#858585;font-family:'Liberation Mono',monospace;font-style:italic;-webkit-text-stroke:0;">beanName: "serviceA3"  singletonObject: "ServiceA{b=com.hanxueming.demo3.ServiceB3}"</div>
<div class="t" style="left:638px;top:203.60px;font-size:8.5px;font-family:'Liberation Mono',monospace;font-style:italic;-webkit-text-stroke:0;color:#9cc0ea">beanName: <span style="color:#e8a848">"serviceA3"</span>  singletonObject: <span style="color:#e8a848">"ServiceA{b=com.hanxueming.demo3.ServiceB3}"</span></div>
<svg style="left:1275px;top:56px" width="5" height="5" viewBox="0 0 5 5"><path d="M0.5 2.5 L2 4 L4.5 0.5" stroke="#59a869" stroke-width="1.2" fill="none"/></svg>
<div class="a" style="left:1277px;top:101px;width:3px;height:30px;background:#4a4a4a;"></div>
<div class="a" style="left:1276px;top:113px;width:4px;height:1px;background:#a0705a;"></div>
<div class="a" style="left:1276px;top:133px;width:4px;height:1px;background:#b87a4a;"></div>
</div></div>
<div class="a" style="left:226px;top:306px;width:1054px;height:17px;background:#313335;"></div>
<div class="t" style="left:301px;top:308.00px;font-size:9.45px;color:#c2c2c2;">DefaultSingletonBeanRegistry</div>
<svg style="left:434px;top:312px" width="4" height="7" viewBox="0 0 4 7"><path d="M0.5 0.5 L3 3.5 L0.5 6.5" stroke="#6a6a6a" fill="none" stroke-width="0.8"/></svg>
<div class="t" style="left:445px;top:308.00px;font-size:9.45px;color:#c2c2c2;">addSingleton()</div>
<div class="a" style="left:12px;top:323px;width:1268px;height:19px;background:#3a4858;"></div>
<div class="t" style="left:16px;top:325.80px;font-size:9.8px;color:#c2c2c2;">Debug:</div>
<svg style="left:62px;top:327px" width="12" height="11" viewBox="0 0 12 11"><rect x="0.5" y="3" width="9" height="6" rx="1" fill="#5f6d7a"/><path d="M2 3 L4 0.5 M6 3 L8 0.5" stroke="#5f6d7a" stroke-width="1"/><circle cx="9.5" cy="9" r="1.8" fill="#4fae4f"/></svg>
<div class="t" style="left:76.5px;top:325.80px;font-size:9.8px;color:#c2c2c2;">Spring-Framework [Demo3.main()]</div>
<svg style="left:234.5px;top:330px" width="6" height="6" viewBox="0 0 6 6"><path d="M0.5 0.5 L5.5 5.5 M5.5 0.5 L0.5 5.5" stroke="#525d68" stroke-width="0.9"/></svg>
<svg style="left:257px;top:327px" width="12" height="12" viewBox="0 0 12 12"><rect x="0.5" y="1.5" width="9" height="8" fill="none" stroke="#9fb3c5" stroke-width="1"/><rect x="2" y="4" width="6" height="1.2" fill="#9fb3c5"/><rect x="2" y="6.5" width="4" height="1.2" fill="#3a8fc0"/><circle cx="10" cy="10" r="1.8" fill="#3dba3a"/></svg>
<div class="t" style="left:270.6px;top:325.80px;font-size:9.8px;color:#c2c2c2;">:my-test:Demo3.main()</div>
<svg style="left:377px;top:330px" width="6" height="6" viewBox="0 0 6 6"><path d="M0.5 0.5 L5.5 5.5 M5.5 0.5 L0.5 5.5" stroke="#525d68" stroke-width="0.9"/></svg>
<div class="a" style="left:247px;top:341px;width:144px;height:2px;background:#4a88c7;"></div>
<svg style="left:1253px;top:328px" width="10" height="10" viewBox="0 0 10 10"><path d="M6.34 8.23 L6.24 9.84 L3.76 9.84 L3.66 8.23 L2.87 7.78 L1.43 8.50 L0.18 6.34 L1.53 5.46 L1.53 4.54 L0.18 3.66 L1.43 1.50 L2.87 2.22 L3.66 1.77 L3.76 0.16 L6.24 0.16 L6.34 1.77 L7.13 2.22 L8.57 1.50 L9.82 3.66 L8.47 4.54 L8.47 5.46 L9.82 6.34 L8.57 8.50 L7.13 7.78Z" fill="#c4c4c4"/><circle cx="5.0" cy="5.0" r="2.00" fill="#3a4858"/></svg>
<div class="a" style="left:1270px;top:332.5px;width:10px;height:1.5px;background:#c0c0c0;"></div>
<div class="a" style="left:12px;top:342px;width:1268px;height:304px;background:#3e3f41;"></div>
<div class="a" style="left:12px;top:342px;width:21px;height:304px;background:#3e3f41;"></div>
<div class="a" style="left:33px;top:342px;width:1px;height:304px;background:#3b3c3e;"></div>
<svg style="left:16px;top:347px" width="13" height="12" viewBox="0 0 13 12"><path d="M3 8 A4.5 4.5 0 1 1 9 3" stroke="#499c54" stroke-width="2" fill="none"/><path d="M7 0 L11 3 L7 6Z" fill="#499c54"/><rect x="7.5" y="7.5" width="4.5" height="4.5" fill="#c8c8c8"/></svg>
<svg style="left:17px;top:371px" width="11" height="11" viewBox="0 0 11 11"><rect x="0" y="0.5" width="2.2" height="10" fill="#499c54"/><path d="M3.5 0.5 L11 5.5 L3.5 10.5Z" fill="#499c54"/></svg>
<svg style="left:19px;top:390px" width="7" height="10" viewBox="0 0 7 10"><rect x="0" y="0" width="2" height="10" fill="#5a5d5f"/><rect x="4.5" y="0" width="2" height="10" fill="#5a5d5f"/></svg>
<div class="a" style="left:18px;top:409px;width:9px;height:9px;background:#db5c5c;"></div>
<svg style="left:16px;top:431px" width="13" height="12" viewBox="0 0 13 12"><circle cx="4" cy="7.5" r="3.8" fill="#db5c5c"/><circle cx="8.5" cy="4" r="3.8" fill="#db5c5c" stroke="#3e3f41" stroke-width="0.8"/></svg>
<svg style="left:16px;top:451px" width="12" height="12" viewBox="0 0 12 12"><circle cx="6" cy="6" r="4.2" fill="#db5c5c"/><path d="M0.5 11 L11.5 1" stroke="#c0c0c0" stroke-width="1"/></svg>
<div class="a" style="left:15px;top:469px;width:16px;height:1px;background:#4a4d4f;"></div>
<svg style="left:16px;top:476px" width="11" height="10" viewBox="0 0 11 10"><path d="M0 2.5 H3 L4 0.5 H7 L8 2.5 H11 V10 H0Z" fill="#b8b8b8"/><circle cx="5.5" cy="6" r="2.2" fill="#3e3f41"/><circle cx="5.5" cy="6" r="1.1" fill="#b8b8b8"/></svg>
<div class="a" style="left:15px;top:493px;width:16px;height:1px;background:#4a4d4f;"></div>
<svg style="left:17px;top:500px" width="10" height="10" viewBox="0 0 10 10"><path d="M6.34 8.23 L6.24 9.84 L3.76 9.84 L3.66 8.23 L2.87 7.78 L1.43 8.50 L0.18 6.34 L1.53 5.46 L1.53 4.54 L0.18 3.66 L1.43 1.50 L2.87 2.22 L3.66 1.77 L3.76 0.16 L6.24 0.16 L6.34 1.77 L7.13 2.22 L8.57 1.50 L9.82 3.66 L8.47 4.54 L8.47 5.46 L9.82 6.34 L8.57 8.50 L7.13 7.78Z" fill="#b8b8b8"/><circle cx="5.0" cy="5.0" r="2.00" fill="#3e3f41"/></svg>
<svg style="left:25px;top:508px" width="4" height="3" viewBox="0 0 4 3"><path d="M0 0 H4 L2 3Z" fill="#ddd"/></svg>
<div class="a" style="left:15px;top:517px;width:16px;height:1px;background:#4a4d4f;"></div>
<svg style="left:16px;top:523px" width="11" height="11" viewBox="0 0 11 11"><path d="M6 0.5 L10.5 5 L8.5 5.5 L6 8 L6.5 9.5 L1.5 4.5 L3 5 L5.5 2.5Z M3.5 7.5 L0.5 10.5" fill="#b8b8b8" stroke="#b8b8b8" stroke-width="0.8"/></svg>
<div class="a" style="left:34px;top:342px;width:1246px;height:20px;background:#3e3f41;"></div>
<div class="a" style="left:34px;top:361px;width:1246px;height:1px;background:#323232;"></div>
<svg style="left:43px;top:348px" width="10" height="9" viewBox="0 0 10 9"><rect x="0" y="0" width="10" height="9" fill="#bdbdbd"/><path d="M2.5 2 L5 4.5 L2.5 7" stroke="#3e3f41" stroke-width="1.2" fill="none"/></svg>
<div class="t" style="left:57px;top:345.50px;font-size:8.8px;color:#c2c2c2;">Console</div>
<div class="t" style="left:104px;top:345.50px;font-size:8.6px;color:#c4c4c4;">Debugger</div>
<div class="a" style="left:95px;top:361px;width:57px;height:2px;background:#4a7fb5;"></div>
<svg style="left:155px;top:347px" width="11" height="10" viewBox="0 0 11 10"><rect x="0.5" y="0.5" width="10" height="1.5" fill="#c8c8c8"/><rect x="0" y="3.4" width="11" height="3" fill="#3592c4"/><rect x="0.5" y="7.9" width="10" height="1.5" fill="#c8c8c8"/></svg>
<svg style="left:178px;top:347px" width="12" height="11" viewBox="0 0 12 11"><path d="M1 6 Q5 1 9 5" stroke="#3592c4" stroke-width="1.6" fill="none"/><path d="M7.5 2.5 L11.5 6.5 L7 7Z" fill="#3592c4"/><rect x="1" y="9" width="10" height="1.6" fill="#d0d0d0"/></svg>
<svg style="left:197px;top:347px" width="12" height="11" viewBox="0 0 12 11"><path d="M6 0 V5" stroke="#3592c4" stroke-width="2"/><path d="M2.5 4 L6 7.5 L9.5 4Z" fill="#3592c4"/><rect x="1" y="9" width="10" height="1.6" fill="#d0d0d0"/></svg>
<svg style="left:216px;top:347px" width="12" height="11" viewBox="0 0 12 11"><path d="M6 0 V5" stroke="#db5c5c" stroke-width="2"/><path d="M2.5 4 L6 7.5 L9.5 4Z" fill="#db5c5c"/><rect x="1" y="9" width="10" height="1.6" fill="#d0d0d0"/></svg>
<svg style="left:235px;top:347px" width="12" height="11" viewBox="0 0 12 11"><path d="M6 8 V3" stroke="#3592c4" stroke-width="2"/><path d="M2.5 4 L6 0.5 L9.5 4Z" fill="#3592c4"/><rect x="1" y="9" width="10" height="1.6" fill="#d0d0d0"/></svg>
<svg style="left:254px;top:347px" width="11" height="11" viewBox="0 0 11 11"><path d="M0 0 L4 4 M4 0 L0 4" stroke="#db5c5c" stroke-width="1.3"/><rect x="3" y="3.5" width="7" height="7" fill="none" stroke="#c0c0c0" stroke-width="1.1"/></svg>
<svg style="left:273px;top:347px" width="12" height="11" viewBox="0 0 12 11"><path d="M0 0 L6 5" stroke="#3592c4" stroke-width="1.5"/><path d="M3 5.5 L7 6 L6.5 2Z" fill="#3592c4"/><rect x="8" y="4" width="1.6" height="7" fill="#8c8c8c"/><rect x="5" y="9.5" width="6" height="1.5" fill="#8c8c8c"/></svg>
<div class="a" style="left:290px;top:346px;width:1px;height:13px;background:#4a4d4f;"></div>
<svg style="left:297px;top:347px" width="11" height="11" viewBox="0 0 11 11"><rect x="0.5" y="0.5" width="10" height="10" fill="none" stroke="#bdbdbd" stroke-width="1"/><rect x="2" y="2" width="7" height="2" fill="#bdbdbd"/><rect x="2" y="5.5" width="2" height="1.5" fill="#bdbdbd"/><rect x="5" y="5.5" width="2" height="1.5" fill="#bdbdbd"/><rect x="2" y="8" width="2" height="1.5" fill="#bdbdbd"/><rect x="5" y="8" width="2" height="1.5" fill="#bdbdbd"/></svg>
<svg style="left:316px;top:347px" width="10" height="11" viewBox="0 0 10 11"><path d="M0 2 H4 M6 2 H10 M0 5.5 H4 M6 5.5 H10 M0 9 H4 M6 9 H10" stroke="#5a5d5f" stroke-width="1.2"/></svg>
<svg style="left:1270px;top:347px" width="12" height="12" viewBox="0 0 12 12"><rect x="0" y="0" width="5" height="3" fill="#c0c0c0"/><rect x="6" y="0" width="5" height="3" fill="#c0c0c0"/><rect x="0" y="4.5" width="11" height="3" fill="#c0c0c0"/><path d="M8 9 L11 9 L9.5 11Z" fill="#ddd"/></svg>
<div class="a" style="left:34px;top:362px;width:616px;height:284px;background:#3e3f41;"></div>
<div class="a" style="left:34px;top:382px;width:616px;height:1px;background:#323232;"></div>
<div class="t" style="left:43px;top:365.60px;font-size:8.2px;color:#c4c4c4;">Frames</div>
<div class="t" style="left:89px;top:365.60px;font-size:8.2px;color:#c4c4c4;">Threads</div>
<div class="a" style="left:34px;top:380px;width:48px;height:2px;background:#5c6064;"></div>
<div class="a" style="left:36px;top:385px;width:550px;height:17px;border:1px solid #5e6060;background:#3e3f41;border-radius:2px"></div>
<svg style="left:41px;top:388px" width="12" height="10" viewBox="0 0 12 10"><path d="M1 5 L4.5 8.5 L11 1" stroke="#e08a35" stroke-width="2" fill="none"/></svg>
<div class="t" style="left:55px;top:386.40px;font-size:10.1px;color:#c2c2c2;">"main"@1 in group "main": RUNNING</div>
<svg style="left:575px;top:391px" width="7" height="4" viewBox="0 0 7 4"><path d="M0 0 H7 L3.5 4Z" fill="#aaaaaa"/></svg>
<svg style="left:596px;top:388px" width="8" height="11" viewBox="0 0 8 11"><path d="M4 11 V1 M1 4 L4 1 L7 4" stroke="#5e6163" stroke-width="1.3" fill="none"/></svg>
<svg style="left:614px;top:388px" width="8" height="11" viewBox="0 0 8 11"><path d="M4 0 V10 M1 7 L4 10 L7 7" stroke="#bdbdbd" stroke-width="1.3" fill="none"/></svg>
<svg style="left:631px;top:388px" width="12" height="11" viewBox="0 0 12 11"><path d="M0 0 H12 L7.5 5 V11 L4.5 9.5 V5Z" fill="#bdbdbd"/></svg>
<div class="a" style="left:649px;top:362px;width:1px;height:284px;background:#2f3133;"></div>
<div class="a" style="left:34px;top:406.0px;width:615px;height:14.8px;background:#2f65ca;"></div>
<div class="t" style="left:45px;top:406.40px;font-size:10.5px;color:#ffffff">addSingleton:135, DefaultSingletonBeanRegistry <i>(org.springframework.beans.factory.support)</i></div>
<div class="t" style="left:45px;top:420.95px;font-size:10.5px;color:#c2c2c2">getSingleton:248, DefaultSingletonBeanRegistry <i style="color:#707376">(org.springframework.beans.factory.support)</i></div>
<div class="t" style="left:45px;top:435.50px;font-size:10.5px;color:#c2c2c2">doGetBean:321, AbstractBeanFactory <i style="color:#707376">(org.springframework.beans.factory.support)</i></div>
<div class="t" style="left:45px;top:450.05px;font-size:10.5px;color:#c2c2c2">getBean:202, AbstractBeanFactory <i style="color:#707376">(org.springframework.beans.factory.support)</i></div>
<div class="t" style="left:45px;top:464.60px;font-size:10.5px;color:#c2c2c2">preInstantiateSingletons:878, DefaultListableBeanFactory <i style="color:#707376">(org.springframework.beans.factory.support)</i></div>
<div class="t" style="left:45px;top:479.15px;font-size:10.5px;color:#c2c2c2">finishBeanFactoryInitialization:877, AbstractApplicationContext <i style="color:#707376">(org.springframework.context.support)</i></div>
<div class="t" style="left:45px;top:493.70px;font-size:10.5px;color:#c2c2c2">refresh:549, AbstractApplicationContext <i style="color:#707376">(org.springframework.context.support)</i></div>
<div class="t" style="left:45px;top:508.25px;font-size:10.5px;color:#c2c2c2">&lt;init&gt;:144, ClassPathXmlApplicationContext <i style="color:#707376">(org.springframework.context.support)</i></div>
<div class="t" style="left:45px;top:522.80px;font-size:10.5px;color:#c2c2c2">&lt;init&gt;:85, ClassPathXmlApplicationContext <i style="color:#707376">(org.springframework.context.support)</i></div>
<div class="t" style="left:45px;top:537.35px;font-size:10.5px;color:#c2c2c2">main:8, Demo3 <i style="color:#707376">(com.hanxueming.demo3)</i></div>
<div class="a" style="left:650px;top:362px;width:569px;height:284px;background:#3e3f41;"></div>
<div class="a" style="left:650px;top:382px;width:569px;height:1px;background:#323232;"></div>
<div class="t" style="left:658.8px;top:365.60px;font-size:8.55px;color:#c4c4c4;">Variables</div>
<div class="a" style="left:650px;top:383px;width:17px;height:263px;background:#3e3f41;"></div>
<div class="a" style="left:667px;top:383px;width:1px;height:263px;background:#323232;"></div>
<svg style="left:653.5px;top:388px" width="10" height="10" viewBox="0 0 10 10"><path d="M5 0.5 V9.5 M0.5 5 H9.5" stroke="#c8c8c8" stroke-width="1.4"/></svg>
<div class="a" style="left:654px;top:410.5px;width:9px;height:1.4px;background:#c8c8c8;"></div>
<svg style="left:653.5px;top:425px" width="10" height="6" viewBox="0 0 10 6"><path d="M0 6 L5 0.5 L10 6Z" fill="#c8c8c8"/></svg>
<svg style="left:653.5px;top:444px" width="10" height="6" viewBox="0 0 10 6"><path d="M0 0 L5 5.5 L10 0Z" fill="#5e6163"/></svg>
<svg style="left:653px;top:460px" width="11" height="11" viewBox="0 0 11 11"><rect x="0.5" y="0.5" width="7" height="7" fill="none" stroke="#c0c0c0" stroke-width="1"/><rect x="3" y="3" width="7.5" height="7.5" fill="#3e3f41" stroke="#c0c0c0" stroke-width="1"/></svg>
<div class="a" style="left:650px;top:479px;width:16px;height:15px;background:#4c5052;"></div>
<svg style="left:653px;top:483px" width="11" height="6" viewBox="0 0 11 6"><circle cx="2.6" cy="3" r="2.2" fill="none" stroke="#c0c0c0" stroke-width="1"/><circle cx="8.4" cy="3" r="2.2" fill="none" stroke="#c0c0c0" stroke-width="1"/></svg>
<div class="a" style="left:668px;top:383px;width:551px;height:263px;overflow:hidden"><div class="a" style="left:-668px;top:-383px;width:1280px;height:646px">
<div class="a" style="left:668px;top:587.1px;width:551px;height:14.8px;background:#2f65ca;"></div>
<svg style="left:668.5px;top:387.8px" width="8" height="6" viewBox="0 0 8 6"><path d="M0 0 H8 L4 6Z" fill="#c0c0c0"/></svg>
<svg style="left:681.5px;top:387.8px" width="12" height="6" viewBox="0 0 12 6"><circle cx="3" cy="3" r="2.3" fill="none" stroke="#b0b0b0" stroke-width="1"/><circle cx="9" cy="3" r="2.3" fill="none" stroke="#b0b0b0" stroke-width="1"/></svg>
<div class="t" style="left:695.5px;top:383.80px;font-size:10.5px;color:#c2c2c2"><span style="color:#ea6a6a">this.earlySingletonObjects</span><span style="color:#c2c2c2"> = </span><span style="color:#838383">{HashMap@1994}</span><span style="color:#c2c2c2">  size = 1</span></div>
<svg style="left:682px;top:401.35px" width="6" height="8" viewBox="0 0 6 8"><path d="M0 0 V8 L6 4Z" fill="#c0c0c0"/></svg>
<svg style="left:695.5px;top:400.35px" width="10" height="10" viewBox="0 0 10 10"><rect x="0" y="0" width="10" height="10" fill="#c0923a"/><rect x="0" y="2.7" width="10" height="1.1" fill="#3e3f41"/><rect x="0" y="6" width="10" height="1.1" fill="#3e3f41"/></svg>
<div class="t" style="left:711px;top:398.35px;font-size:10.5px;color:#c2c2c2"><span style="color:#7a9164">"serviceA3"</span><span style="color:#838383"> -&gt; </span><span style="color:#838383">{ServiceA3@2398}</span><span style="color:#c2c2c2"> "ServiceA{b=com.hanxueming.demo3.ServiceB3}"</span></div>
<svg style="left:668.5px;top:416.90000000000003px" width="8" height="6" viewBox="0 0 8 6"><path d="M0 0 H8 L4 6Z" fill="#c0c0c0"/></svg>
<svg style="left:681.5px;top:416.90000000000003px" width="12" height="6" viewBox="0 0 12 6"><circle cx="3" cy="3" r="2.3" fill="none" stroke="#b0b0b0" stroke-width="1"/><circle cx="9" cy="3" r="2.3" fill="none" stroke="#b0b0b0" stroke-width="1"/></svg>
<div class="t" style="left:695.5px;top:412.90px;font-size:10.5px;color:#c2c2c2"><span style="color:#ea6a6a">this.singletonObjects</span><span style="color:#c2c2c2"> = </span><span style="color:#838383">{ConcurrentHashMap@1991}</span><span style="color:#c2c2c2">  size = 11</span></div>
<svg style="left:682px;top:430.45000000000005px" width="6" height="8" viewBox="0 0 6 8"><path d="M0 0 V8 L6 4Z" fill="#c0c0c0"/></svg>
<svg style="left:695.5px;top:429.45000000000005px" width="10" height="10" viewBox="0 0 10 10"><rect x="0" y="0" width="10" height="10" fill="#c0923a"/><rect x="0" y="2.7" width="10" height="1.1" fill="#3e3f41"/><rect x="0" y="6" width="10" height="1.1" fill="#3e3f41"/></svg>
<div class="t" style="left:711px;top:427.45px;font-size:10.5px;color:#c2c2c2"><span style="color:#7a9164">"org.springframework.context.annotation.internalConfigurationAnnotationProcessor"</span><span style="color:#838383"> -&gt; </span><span style="color:#838383">{Configuration...</span><span style="color:#c2c2c2"></span><span style="color:#5c8ad0"> View</span></div>
<svg style="left:682px;top:445.0px" width="6" height="8" viewBox="0 0 6 8"><path d="M0 0 V8 L6 4Z" fill="#c0c0c0"/></svg>
<svg style="left:695.5px;top:444.0px" width="10" height="10" viewBox="0 0 10 10"><rect x="0" y="0" width="10" height="10" fill="#c0923a"/><rect x="0" y="2.7" width="10" height="1.1" fill="#3e3f41"/><rect x="0" y="6" width="10" height="1.1" fill="#3e3f41"/></svg>
<div class="t" style="left:711px;top:442.00px;font-size:10.5px;color:#c2c2c2"><span style="color:#7a9164">"org.springframework.context.event.internalEventListenerFactory"</span><span style="color:#838383"> -&gt; </span><span style="color:#838383">{DefaultEventListenerFactory@2465}</span><span style="color:#c2c2c2"></span></div>
<svg style="left:682px;top:459.55px" width="6" height="8" viewBox="0 0 6 8"><path d="M0 0 V8 L6 4Z" fill="#c0c0c0"/></svg>
<svg style="left:695.5px;top:458.55px" width="10" height="10" viewBox="0 0 10 10"><rect x="0" y="0" width="10" height="10" fill="#c0923a"/><rect x="0" y="2.7" width="10" height="1.1" fill="#3e3f41"/><rect x="0" y="6" width="10" height="1.1" fill="#3e3f41"/></svg>
<div class="t" style="left:711px;top:456.55px;font-size:10.5px;color:#c2c2c2"><span style="color:#7a9164">"systemEnvironment"</span><span style="color:#838383"> -&gt; </span><span style="color:#838383">{Collections$UnmodifiableMap@2467}</span><span style="color:#c2c2c2">  size = 16</span></div>
<svg style="left:682px;top:474.1px" width="6" height="8" viewBox="0 0 6 8"><path d="M0 0 V8 L6 4Z" fill="#c0c0c0"/></svg>
<svg style="left:695.5px;top:473.1px" width="10" height="10" viewBox="0 0 10 10"><rect x="0" y="0" width="10" height="10" fill="#c0923a"/><rect x="0" y="2.7" width="10" height="1.1" fill="#3e3f41"/><rect x="0" y="6" width="10" height="1.1" fill="#3e3f41"/></svg>
<div class="t" style="left:711px;top:471.10px;font-size:10.5px;color:#c2c2c2"><span style="color:#7a9164">"org.springframework.context.event.internalEventListenerProcessor"</span><span style="color:#838383"> -&gt; </span><span style="color:#838383">{EventListenerMethodProcessor@2469}</span><span style="color:#c2c2c2"></span></div>
<svg style="left:682px;top:488.65000000000003px" width="6" height="8" viewBox="0 0 6 8"><path d="M0 0 V8 L6 4Z" fill="#c0c0c0"/></svg>
<svg style="left:695.5px;top:487.65000000000003px" width="10" height="10" viewBox="0 0 10 10"><rect x="0" y="0" width="10" height="10" fill="#c0923a"/><rect x="0" y="2.7" width="10" height="1.1" fill="#3e3f41"/><rect x="0" y="6" width="10" height="1.1" fill="#3e3f41"/></svg>
<div class="t" style="left:711px;top:485.65px;font-size:10.5px;color:#c2c2c2"><span style="color:#7a9164">"org.springframework.context.annotation.internalAutowiredAnnotationProcessor"</span><span style="color:#838383"> -&gt; </span><span style="color:#838383">{AutowiredAnnota...</span><span style="color:#c2c2c2"></span><span style="color:#5c8ad0"> View</span></div>
<svg style="left:682px;top:503.20000000000005px" width="6" height="8" viewBox="0 0 6 8"><path d="M0 0 V8 L6 4Z" fill="#c0c0c0"/></svg>
<svg style="left:695.5px;top:502.20000000000005px" width="10" height="10" viewBox="0 0 10 10"><rect x="0" y="0" width="10" height="10" fill="#c0923a"/><rect x="0" y="2.7" width="10" height="1.1" fill="#3e3f41"/><rect x="0" y="6" width="10" height="1.1" fill="#3e3f41"/></svg>
<div class="t" style="left:711px;top:500.20px;font-size:10.5px;color:#c2c2c2"><span style="color:#7a9164">"org.springframework.context.annotation.ConfigurationClassPostProcessor.importRegistry"</span><span style="color:#838383"> -&gt; </span><span style="color:#838383">{Config...</span><span style="color:#c2c2c2"></span><span style="color:#5c8ad0"> View</span></div>
<svg style="left:682px;top:517.75px" width="6" height="8" viewBox="0 0 6 8"><path d="M0 0 V8 L6 4Z" fill="#c0c0c0"/></svg>
<svg style="left:695.5px;top:516.75px" width="10" height="10" viewBox="0 0 10 10"><rect x="0" y="0" width="10" height="10" fill="#c0923a"/><rect x="0" y="2.7" width="10" height="1.1" fill="#3e3f41"/><rect x="0" y="6" width="10" height="1.1" fill="#3e3f41"/></svg>
<div class="t" style="left:711px;top:514.75px;font-size:10.5px;color:#c2c2c2"><span style="color:#7a9164">"applicationEventMulticaster"</span><span style="color:#838383"> -&gt; </span><span style="color:#838383">{SimpleApplicationEventMulticaster@2473}</span><span style="color:#c2c2c2"></span></div>
<svg style="left:682px;top:532.3px" width="6" height="8" viewBox="0 0 6 8"><path d="M0 0 V8 L6 4Z" fill="#c0c0c0"/></svg>
<svg style="left:695.5px;top:531.3px" width="10" height="10" viewBox="0 0 10 10"><rect x="0" y="0" width="10" height="10" fill="#c0923a"/><rect x="0" y="2.7" width="10" height="1.1" fill="#3e3f41"/><rect x="0" y="6" width="10" height="1.1" fill="#3e3f41"/></svg>
<div class="t" style="left:711px;top:529.30px;font-size:10.5px;color:#c2c2c2"><span style="color:#7a9164">"environment"</span><span style="color:#838383"> -&gt; </span><span style="color:#838383">{StandardEnvironment@2475}</span><span style="color:#c2c2c2"> "StandardEnvironment {activeProfiles=[], defaultProfi...</span><span style="color:#5c8ad0"> View</span></div>
<svg style="left:682px;top:546.85px" width="6" height="8" viewBox="0 0 6 8"><path d="M0 0 V8 L6 4Z" fill="#c0c0c0"/></svg>
<svg style="left:695.5px;top:545.85px" width="10" height="10" viewBox="0 0 10 10"><rect x="0" y="0" width="10" height="10" fill="#c0923a"/><rect x="0" y="2.7" width="10" height="1.1" fill="#3e3f41"/><rect x="0" y="6" width="10" height="1.1" fill="#3e3f41"/></svg>
<div class="t" style="left:711px;top:543.85px;font-size:10.5px;color:#c2c2c2"><span style="color:#7a9164">"systemProperties"</span><span style="color:#838383"> -&gt; </span><span style="color:#838383">{Properties@2477}</span><span style="color:#c2c2c2">  size = 56</span></div>
<svg style="left:682px;top:561.4000000000001px" width="6" height="8" viewBox="0 0 6 8"><path d="M0 0 V8 L6 4Z" fill="#c0c0c0"/></svg>
<svg style="left:695.5px;top:560.4000000000001px" width="10" height="10" viewBox="0 0 10 10"><rect x="0" y="0" width="10" height="10" fill="#c0923a"/><rect x="0" y="2.7" width="10" height="1.1" fill="#3e3f41"/><rect x="0" y="6" width="10" height="1.1" fill="#3e3f41"/></svg>
<div class="t" style="left:711px;top:558.40px;font-size:10.5px;color:#c2c2c2"><span style="color:#7a9164">"serviceB3"</span><span style="color:#838383"> -&gt; </span><span style="color:#838383">{ServiceB3@2948}</span><span style="color:#c2c2c2"> "ServiceB{a=com.hanxueming.demo3.ServiceA3}"</span></div>
<svg style="left:682px;top:575.95px" width="6" height="8" viewBox="0 0 6 8"><path d="M0 0 V8 L6 4Z" fill="#c0c0c0"/></svg>
<svg style="left:695.5px;top:574.95px" width="10" height="10" viewBox="0 0 10 10"><rect x="0" y="0" width="10" height="10" fill="#c0923a"/><rect x="0" y="2.7" width="10" height="1.1" fill="#3e3f41"/><rect x="0" y="6" width="10" height="1.1" fill="#3e3f41"/></svg>
<div class="t" style="left:711px;top:572.95px;font-size:10.5px;color:#c2c2c2"><span style="color:#7a9164">"messageSource"</span><span style="color:#838383"> -&gt; </span><span style="color:#838383">{DelegatingMessageSource@2479}</span><span style="color:#c2c2c2"> "Empty MessageSource"</span></div>
<svg style="left:681.5px;top:591.5px" width="12" height="6" viewBox="0 0 12 6"><circle cx="3" cy="3" r="2.3" fill="none" stroke="#e0e0e0" stroke-width="1"/><circle cx="9" cy="3" r="2.3" fill="none" stroke="#e0e0e0" stroke-width="1"/></svg>
<div class="t" style="left:695.5px;top:587.50px;font-size:10.5px;color:#c2c2c2"><span style="color:#ffffff">this.singletonFactories = {HashMap@2444}  size = 0</span></div>
<svg style="left:669px;top:605.05px" width="6" height="8" viewBox="0 0 6 8"><path d="M0 0 V8 L6 4Z" fill="#c0c0c0"/></svg>
<svg style="left:682.5px;top:604.05px" width="10" height="10" viewBox="0 0 10 10"><rect x="0" y="0" width="10" height="10" fill="#c0923a"/><rect x="0" y="2.7" width="10" height="1.1" fill="#3e3f41"/><rect x="0" y="6" width="10" height="1.1" fill="#3e3f41"/></svg>
<div class="t" style="left:695.5px;top:602.05px;font-size:10.5px;color:#c2c2c2"><span style="color:#ea6a6a">this</span><span style="color:#c2c2c2"> = </span><span style="color:#838383">{DefaultListableBeanFactory@1921}</span><span style="color:#c2c2c2"> "org.springframework.beans.factory.support.DefaultListableBe...</span><span style="color:#5c8ad0"> View</span></div>
<svg style="left:669px;top:619.6px" width="6" height="8" viewBox="0 0 6 8"><path d="M0 0 V8 L6 4Z" fill="#c0c0c0"/></svg>
<svg style="left:682.5px;top:618.6px" width="10" height="10" viewBox="0 0 10 10"><circle cx="5" cy="5" r="4.8" fill="#c0923a"/><text x="5" y="8" font-size="7.5" text-anchor="middle" fill="#3e3f41" font-family="Liberation Sans" font-weight="bold">p</text></svg>
<div class="t" style="left:695.5px;top:616.60px;font-size:10.5px;color:#c2c2c2"><span style="color:#ea6a6a">beanName</span><span style="color:#c2c2c2"> = </span><span style="color:#7a9164">"serviceA3"</span></div>
<svg style="left:669px;top:634.1500000000001px" width="6" height="8" viewBox="0 0 6 8"><path d="M0 0 V8 L6 4Z" fill="#c0c0c0"/></svg>
<svg style="left:682.5px;top:633.1500000000001px" width="10" height="10" viewBox="0 0 10 10"><circle cx="5" cy="5" r="4.8" fill="#c0923a"/><text x="5" y="8" font-size="7.5" text-anchor="middle" fill="#3e3f41" font-family="Liberation Sans" font-weight="bold">p</text></svg>
<div class="t" style="left:695.5px;top:631.15px;font-size:10.5px;color:#c2c2c2"><span style="color:#ea6a6a">singletonObject</span><span style="color:#c2c2c2"> = </span><span style="color:#838383">{ServiceA3@2398}</span><span style="color:#c2c2c2"> "ServiceA{b=com.hanxueming.demo3.ServiceB3}"</span></div>
</div></div>
<div class="a" style="left:1219px;top:362px;width:61px;height:284px;background:#3e3f41;"></div>
<div class="a" style="left:1218px;top:362px;width:1px;height:284px;background:#2f3133;"></div>
<div class="a" style="left:1219px;top:382px;width:61px;height:1px;background:#323232;"></div>
<div class="t" style="left:1229px;top:365.00px;font-size:8.7px;color:#c4c4c4;">Memor</div>
<svg style="left:1266px;top:368px" width="14" height="9" viewBox="0 0 14 9"><path d="M0 4 L2 6 L4 4Z" fill="#aaa"/><rect x="5" y="1" width="7" height="1.3" fill="#aaa"/><rect x="5" y="3.7" width="7" height="1.3" fill="#aaa"/><rect x="5" y="6.4" width="7" height="1.3" fill="#aaa"/><path d="M12.5 4 L14 5.5 L14 4Z" fill="#aaa"/></svg>
<div class="a" style="left:1219px;top:380px;width:44px;height:2px;background:#787b7e;"></div>
<div class="a" style="left:1221px;top:385px;width:42px;height:17px;border:1px solid #5e6060;border-radius:2px;background:#45494a"></div>
<svg style="left:1226px;top:389px" width="10" height="10" viewBox="0 0 10 10"><circle cx="4" cy="4" r="3" fill="none" stroke="#8a8d8f" stroke-width="1"/><path d="M6.2 6.2 L9 9" stroke="#8a8d8f" stroke-width="1.2"/></svg>
<svg style="left:1270px;top:388.5px" width="10" height="10" viewBox="0 0 10 10"><path d="M6.34 8.23 L6.24 9.84 L3.76 9.84 L3.66 8.23 L2.87 7.78 L1.43 8.50 L0.18 6.34 L1.53 5.46 L1.53 4.54 L0.18 3.66 L1.43 1.50 L2.87 2.22 L3.66 1.77 L3.76 0.16 L6.24 0.16 L6.34 1.77 L7.13 2.22 L8.57 1.50 L9.82 3.66 L8.47 4.54 L8.47 5.46 L9.82 6.34 L8.57 8.50 L7.13 7.78Z" fill="#c4c4c4"/><circle cx="5.0" cy="5.0" r="2.00" fill="#3e3f41"/></svg>
<div class="a" style="left:1219px;top:404px;width:61px;height:17px;background:#45494a;"></div>
<div class="a" style="left:1219px;top:421px;width:61px;height:1px;background:#323232;"></div>
<div class="t" style="left:1224px;top:406.50px;font-size:8px;color:#c2c2c2;">..</div>
<div class="a" style="left:1230px;top:405px;width:1px;height:15px;background:#5e6060;"></div>
<div class="t" style="left:1236px;top:406.50px;font-size:9.6px;color:#c2c2c2;">Count</div>
<div class="t" style="left:1219px;top:516px;font-size:10.3px;color:#808080">s loaded. <span style="color:#5c8ad0">Load</span></div>
<svg style="left:1116px;top:607px" width="18" height="16" viewBox="0 0 16 16"><path d="M1 3 L6 2 M0.5 6 H7 M3.8 2.5 V15.5 M3.5 7 L0.5 12 M4 7.5 L7 10 M8 1 L15 5 M15 1 L8 5 M8 5.5 L15 9 M15 5.5 L8 9 M8 10 H15.5 M10 9 L8 15 M11 10.5 V15.5 M9.5 12 H14.5 V14.5" stroke="rgba(20,20,20,0.5)" stroke-width="2.8" fill="none" stroke-linecap="square"/><path d="M1 3 L6 2 M0.5 6 H7 M3.8 2.5 V15.5 M3.5 7 L0.5 12 M4 7.5 L7 10 M8 1 L15 5 M15 1 L8 5 M8 5.5 L15 9 M15 5.5 L8 9 M8 10 H15.5 M10 9 L8 15 M11 10.5 V15.5 M9.5 12 H14.5 V14.5" stroke="#d4d4d4" stroke-width="1.35" fill="none"/></svg>
<svg style="left:1133.6px;top:607px" width="18" height="16" viewBox="0 0 16 16"><path d="M2.5 6 H13.5 M8 1 V14.5 M0.5 14.5 H15.5" stroke="rgba(20,20,20,0.5)" stroke-width="2.8" fill="none" stroke-linecap="square"/><path d="M2.5 6 H13.5 M8 1 V14.5 M0.5 14.5 H15.5" stroke="#d4d4d4" stroke-width="1.35" fill="none"/></svg>
<svg style="left:1152px;top:607px" width="18" height="16" viewBox="0 0 16 16"><path d="M0.5 5 H5.5 M3 1 V15 L1.5 14 M0.5 11 L5.5 8 M7 1.5 H15 V4 H7 M7 1.5 V10 L6 15.5 M11 5 V15 M8.5 8 V11 H13.5 V8 M8.5 12.5 V15 H14.5 V12.5" stroke="rgba(20,20,20,0.5)" stroke-width="2.8" fill="none" stroke-linecap="square"/><path d="M0.5 5 H5.5 M3 1 V15 L1.5 14 M0.5 11 L5.5 8 M7 1.5 H15 V4 H7 M7 1.5 V10 L6 15.5 M11 5 V15 M8.5 8 V11 H13.5 V8 M8.5 12.5 V15 H14.5 V12.5" stroke="#d4d4d4" stroke-width="1.35" fill="none"/></svg>
<svg style="left:1168.8px;top:607px" width="18" height="16" viewBox="0 0 16 16"><path d="M8 0.5 L0.5 7 M8 0.5 L15.5 7 M4 7.5 H12 M3 10 H13 M8 7.5 V15 M4.5 11.5 L5.5 13.5 M11.5 11.5 L10.5 13.5 M1 15 H15" stroke="rgba(20,20,20,0.5)" stroke-width="2.8" fill="none" stroke-linecap="square"/><path d="M8 0.5 L0.5 7 M8 0.5 L15.5 7 M4 7.5 H12 M3 10 H13 M8 7.5 V15 M4.5 11.5 L5.5 13.5 M11.5 11.5 L10.5 13.5 M1 15 H15" stroke="#d4d4d4" stroke-width="1.35" fill="none"/></svg>
<svg style="left:1188.5px;top:607px" width="18" height="16" viewBox="0 0 16 16"><path d="M0.5 5 H5.5 M3 1 V15 L1.5 14 M0.5 11 L5.5 8 M6.5 4.5 H15.5 M11 1 V7 M7.5 8 H14 L8 15.5 M9 9.5 L15.5 15.5" stroke="rgba(20,20,20,0.5)" stroke-width="2.8" fill="none" stroke-linecap="square"/><path d="M0.5 5 H5.5 M3 1 V15 L1.5 14 M0.5 11 L5.5 8 M6.5 4.5 H15.5 M11 1 V7 M7.5 8 H14 L8 15.5 M9 9.5 L15.5 15.5" stroke="#d4d4d4" stroke-width="1.35" fill="none"/></svg>
<svg style="left:1205px;top:607px" width="18" height="16" viewBox="0 0 16 16"><path d="M1 5 H15 M8 1 V15.5 M7.5 6 L1 14 M8.5 6 L15 14 M11.5 1.5 L13 3" stroke="rgba(20,20,20,0.5)" stroke-width="2.8" fill="none" stroke-linecap="square"/><path d="M1 5 H15 M8 1 V15.5 M7.5 6 L1 14 M8.5 6 L15 14 M11.5 1.5 L13 3" stroke="#d4d4d4" stroke-width="1.35" fill="none"/></svg>
<svg style="left:1224.5px;top:607px" width="18" height="16" viewBox="0 0 16 16"><path d="M3 0.5 L4 2 M0.5 4 H6 L1 10 M3.5 7 V15.5 M4 8.5 L6 10.5 M7.5 6 H15 M11.2 1 V14.5 M7 14.5 H15.5" stroke="rgba(20,20,20,0.5)" stroke-width="2.8" fill="none" stroke-linecap="square"/><path d="M3 0.5 L4 2 M0.5 4 H6 L1 10 M3.5 7 V15.5 M4 8.5 L6 10.5 M7.5 6 H15 M11.2 1 V14.5 M7 14.5 H15.5" stroke="#d4d4d4" stroke-width="1.35" fill="none"/></svg>
<svg style="left:1241px;top:607px" width="18" height="16" viewBox="0 0 16 16"><path d="M15 1 H1.5 V15 H15.5 M4 4 L12 12.5 M12 4 L4 12.5" stroke="rgba(20,20,20,0.5)" stroke-width="2.8" fill="none" stroke-linecap="square"/><path d="M15 1 H1.5 V15 H15.5 M4 4 L12 12.5 M12 4 L4 12.5" stroke="#d4d4d4" stroke-width="1.35" fill="none"/></svg>
<div class="t" style="left:1098px;top:603.5px;height:22px;line-height:22px;font-size:17.5px;color:#d4d4d4;text-shadow:0 0 1.5px rgba(0,0,0,0.7)">@</div>
<svg style="left:949px;top:17px" width="11" height="11" viewBox="0 0 11 11"><path d="M1 3.5 L5 0.5 L8 2 L6.5 4 Z" fill="#59a869"/><path d="M5 3.5 L10.5 10" stroke="#59a869" stroke-width="2.2"/></svg>
<div class="a" style="left:968px;top:16px;width:64px;height:14px;border:1px solid #535658;border-radius:2px"></div>
<svg style="left:971px;top:18px" width="10" height="10" viewBox="0 0 10 10"><rect x="0" y="1" width="9" height="2" fill="#6d7173"/><rect x="0" y="4" width="9" height="2" fill="#6d7173"/><rect x="0" y="7" width="9" height="2" fill="#6d7173"/></svg>
<div class="t" style="left:987.5px;top:16.00px;font-size:9.2px;color:#c2c2c2;">Demo3</div>
<svg style="left:1020px;top:21px" width="7" height="4" viewBox="0 0 7 4"><path d="M0 0 H7 L3.5 4Z" fill="#aaaaaa"/></svg>
<svg style="left:1042px;top:18px" width="8" height="9" viewBox="0 0 8 9"><path d="M0 0 L8 4.5 L0 9Z" fill="#59a869"/></svg>
<svg style="left:1059px;top:17px" width="11" height="11" viewBox="0 0 11 11"><ellipse cx="5.5" cy="6.5" rx="3.5" ry="4.2" fill="#59a869"/><path d="M0.5 4 L2.5 5 M10.5 4 L8.5 5 M0.5 7.5 H2.5 M10.5 7.5 H8.5 M1 11 L3 9.5 M10 11 L8 9.5 M3.5 1 L4.5 2.5 M7.5 1 L6.5 2.5" stroke="#59a869" stroke-width="1"/></svg>
<svg style="left:1078px;top:17px" width="12" height="12" viewBox="0 0 12 12"><path d="M0 1 H6 V9 L3 11 L0 9Z" fill="#a8a8a8"/><path d="M6 5 L11 8.5 L6 12Z" fill="#59a869"/></svg>
<svg style="left:1097px;top:17px" width="12" height="12" viewBox="0 0 12 12"><circle cx="5" cy="5" r="4.2" fill="none" stroke="#a8a8a8" stroke-width="1.3"/><path d="M5 2.5 V5 L6.8 6.5" stroke="#a8a8a8" stroke-width="1" fill="none"/><path d="M7 8 L11.5 10 L7 12Z" fill="#e0e0e0"/></svg>
<svg style="left:1117px;top:18px" width="11" height="11" viewBox="0 0 11 11"><rect x="0" y="0" width="8" height="8" fill="#db5c5c"/><text x="8.5" y="11" font-size="5" fill="#ccc" font-family="Liberation Sans">2</text></svg>
<div class="a" style="left:1134px;top:16px;width:1px;height:14px;background:#4f5254;"></div>
<div class="t" style="left:1140px;top:15.50px;font-size:9.2px;color:#c2c2c2;">Git:</div>
<svg style="left:1161px;top:17px" width="10" height="10" viewBox="0 0 10 10"><path d="M9 1 L2 8" stroke="#3592c4" stroke-width="1.6"/><path d="M0.5 4 V9.5 H6Z" fill="#3592c4"/></svg>
<svg style="left:1180px;top:18px" width="11" height="9" viewBox="0 0 11 9"><path d="M1 4.5 L4 7.5 L10 1" stroke="#59a869" stroke-width="1.8" fill="none"/></svg>
<svg style="left:1199px;top:17px" width="11" height="11" viewBox="0 0 11 11"><circle cx="5.5" cy="5.5" r="4.5" fill="none" stroke="#b8b8b8" stroke-width="1.2"/><path d="M5.5 2.5 V5.5 L7.5 7" stroke="#b8b8b8" stroke-width="1.1" fill="none"/></svg>
<svg style="left:1218px;top:17px" width="11" height="11" viewBox="0 0 11 11"><path d="M3 3 H6.5 A3.5 3.5 0 0 1 6.5 10 H3" stroke="#b8b8b8" stroke-width="1.3" fill="none"/><path d="M0.5 3 L3.5 0.5 V5.5Z" fill="#b8b8b8"/></svg>
<svg style="left:1241px;top:17px" width="13" height="11" viewBox="0 0 13 11"><path d="M0 1 H4.5 L5.5 2.5 H10 V10 H0Z" fill="#9aa7b0"/><rect x="6.5" y="5" width="2.5" height="2.5" fill="#3592c4"/><rect x="9.5" y="5" width="2.5" height="2.5" fill="#3592c4"/><rect x="6.5" y="8" width="2.5" height="2.5" fill="#3592c4"/><rect x="9.5" y="8" width="2.5" height="2.5" fill="#3592c4"/></svg>
<svg style="left:1265px;top:17px" width="13" height="11" viewBox="0 0 13 11"><rect x="0.5" y="0.5" width="12" height="10" fill="none" stroke="#b8b8b8" stroke-width="1"/><rect x="0.5" y="0.5" width="12" height="2" fill="#b8b8b8"/><path d="M2.5 4.5 L4.5 6 L2.5 7.5" stroke="#b8b8b8" stroke-width="0.9" fill="none"/></svg>
</body></html>
